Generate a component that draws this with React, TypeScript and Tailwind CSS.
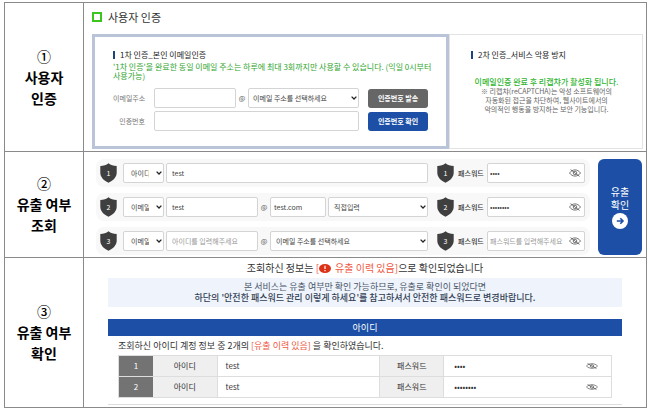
import type { ReactNode } from "react";

const FIELD =
	"h-[20px] min-w-0 rounded-[2px] border border-[#d4d4d4] bg-white text-[7px] text-[#444] placeholder:text-[#999] outline-none";

export default function App() {
	return (
		<main className="pt-[2px] pr-[3px] pb-[3px] pl-1 bg-white font-['Noto_Sans_CJK_KR','Noto_Sans',sans-serif] text-[#333]">
			<div className="border-t border-l border-r border-[#8a8a8a]">
				<Step mark="①" lines={["사용자", "인증"]}>
					<VerifyStep />
				</Step>
				<Step mark="②" lines={["유출 여부", "조회"]}>
					<LookupStep />
				</Step>
				<Step mark="③" lines={["유출 여부", "확인"]}>
					<ResultStep />
				</Step>
			</div>
		</main>
	);
}

function Step({
	mark,
	lines,
	children,
}: { mark: string; lines: string[]; children: ReactNode }) {
	return (
		<section className="flex border-b border-[#8a8a8a]">
			<h2 className="w-[79px] shrink-0 border-r border-[#8a8a8a] flex flex-col items-center justify-center text-center text-[14px] leading-[21px] font-bold text-black">
				<span className="font-medium">{mark}</span>
				{lines.map((line) => (
					<span key={line}>{line}</span>
				))}
			</h2>
			<div className="min-w-0 flex-1">{children}</div>
		</section>
	);
}

// Step 1: e-mail verification next to the captcha notice
function VerifyStep() {
	return (
		<div className="pt-2 pl-2 pr-[3px] pb-[2px]">
			<h3 className="flex items-center gap-[6px] text-[11px] leading-[12px] text-[#333]">
				<span className="size-[10px] border-2 border-[#3cc51f]" />
				사용자 인증
			</h3>
			<div className="mt-[11px] grid grid-cols-[minmax(0,357fr)_minmax(0,194fr)]">
				<form className="border-[3px] border-[#bac4d9] px-[18px] pt-[13px] pb-[15px]">
					<PanelTitle>1차 인증_본인 이메일인증</PanelTitle>
					<p className="mt-[2px] -mr-3 text-[8px] leading-[9px] text-[#2fa52f]">
						'1차 인증'을 완료한 동일 이메일 주소는 하루에 최대 3회까지만 사용할 수
						있습니다. (익일 0시부터
						<br />
						사용가능)
					</p>
					<div className="mt-[8px] flex items-center">
						<label
							htmlFor="mail"
							className="w-8 shrink-0 text-right text-[7px] leading-[10px] whitespace-nowrap text-[#777]"
						>
							이메일주소
						</label>
						<input id="mail" className={`${FIELD} ml-[9px] flex-1 px-1`} />
						<At />
						<Select
							label="이메일 도메인"
							value="이메일 주소를 선택하세요"
							className="w-[111px]"
							pad="pl-1"
						/>
						<button
							type="button"
							className="ml-[9px] h-[19px] w-[60px] shrink-0 rounded-[3px] bg-[#666] text-[7px] font-bold text-white"
						>
							인증번호 발송
						</button>
					</div>
					<div className="mt-[3px] flex items-center">
						<label
							htmlFor="code"
							className="w-8 shrink-0 text-right text-[7px] leading-[10px] whitespace-nowrap text-[#777]"
						>
							인증번호
						</label>
						<input id="code" className={`${FIELD} ml-[9px] flex-1 px-1`} />
						<button
							type="button"
							className="ml-[9px] h-[19px] w-[60px] shrink-0 rounded-[3px] bg-[#1c4fa5] text-[7px] font-bold text-white"
						>
							인증번호 확인
						</button>
					</div>
				</form>
				<div className="border border-[#e3e3e3] pt-[15px] pl-[21px] pr-[20px]">
					<PanelTitle>2차 인증_서비스 악용 방지</PanelTitle>
					<p className="mt-[17px] text-center text-[8px] leading-[10px] font-medium whitespace-nowrap text-[#2fb52f]">
						이메일인증 완료 후 리캡챠가 활성화 됩니다.
					</p>
					<p className="text-center text-[7px] leading-[9px] whitespace-nowrap text-[#666]">
						※ 리캡챠(reCAPTCHA)는 악성 소프트웨어의
						<br />
						자동화된 접근을 차단하여, 웹사이트에서의
						<br />
						악의적인 행동을 방지하는 보안 기능입니다.
					</p>
				</div>
			</div>
		</div>
	);
}

function PanelTitle({ children }: { children: ReactNode }) {
	return (
		<h4 className="flex items-center gap-[5px] text-[8px] leading-[10px] whitespace-nowrap text-[#222]">
			<span className="h-2 w-[2px] bg-[#1d4378]" />
			{children}
		</h4>
	);
}

// Step 2: accounts to look up
function LookupStep() {
	return (
		<form className="flex gap-2 pt-[7px] pr-1 pb-[2px] pl-3">
			<div className="min-w-0 flex-1 space-y-[6px]">
				<LookupRow no={1} kind="아이디" password="test">
					<input
						aria-label="아이디 1"
						defaultValue="test"
						className={`${FIELD} flex-1 px-[5px]`}
					/>
				</LookupRow>
				<LookupRow no={2} kind="이메일" password="testtest">
					<input
						aria-label="이메일 2"
						defaultValue="test"
						className={`${FIELD} flex-1 px-[5px]`}
					/>
					<At />
					<input
						aria-label="도메인 2"
						defaultValue="test.com"
						className={`${FIELD} w-[56px] px-[3px]`}
					/>
					<Select
						label="도메인 선택 2"
						value="직접입력"
						className="ml-[2px] w-[100px]"
						pad="pl-[5px]"
					/>
				</LookupRow>
				<LookupRow no={3} kind="이메일" password="">
					<input
						aria-label="이메일 3"
						placeholder="아이디를 입력해주세요"
						className={`${FIELD} flex-1 px-[5px]`}
					/>
					<At />
					<Select
						label="도메인 선택 3"
						value="이메일 주소를 선택하세요"
						className="w-[158px]"
						pad="pl-[5px]"
					/>
				</LookupRow>
			</div>
			<button
				type="button"
				className="flex w-[44px] shrink-0 flex-col items-center justify-center rounded-[6px] bg-[#1c4fa5] text-[10px] leading-[13px] text-white"
			>
				<span>유출</span>
				<span>확인</span>
				<svg viewBox="0 0 16 16" className="mt-[2px] size-4">
					<circle cx="8" cy="8" r="8" fill="#fff" />
					<path
						d="M4.8 8h6M8.3 5.3 11 8l-2.7 2.7"
						fill="none"
						stroke="#1c4fa5"
						strokeWidth="1.6"
					/>
				</svg>
			</button>
		</form>
	);
}

function LookupRow({
	no,
	kind,
	password,
	children,
}: { no: number; kind: string; password: string; children: ReactNode }) {
	return (
		<div className="flex h-7 items-center rounded-[8px] bg-[#f8f8f8] pr-[5px] pl-1">
			<Shield no={no} />
			<Select
				label={`구분 ${no}`}
				value={kind}
				className="mr-[2px] ml-[6px] w-[41px]"
				pad="pl-[7px]"
			/>
			<div className="flex min-w-0 flex-1 items-center">{children}</div>
			<span className="w-[9px] shrink-0" />
			<Shield no={no} />
			<label
				htmlFor={`pw${no}`}
				className="ml-1 w-[29px] shrink-0 text-[7px] leading-[10px] font-medium whitespace-nowrap"
			>
				패스워드
			</label>
			<div className="relative flex w-[98px] shrink-0">
				<input
					id={`pw${no}`}
					type="password"
					defaultValue={password}
					placeholder="패스워드를 입력해주세요"
					className={`${FIELD} w-full px-[2px]`}
				/>
				<EyeOff className="absolute top-[6px] right-1 h-2 w-3" />
			</div>
		</div>
	);
}

function Select({
	label,
	value,
	className,
	pad,
}: { label: string; value: string; className: string; pad: string }) {
	return (
		<div className={`relative flex shrink-0 ${className}`}>
			<select
				aria-label={label}
				className={`${FIELD} w-full appearance-none pr-[14px] ${pad}`}
			>
				<option>{value}</option>
			</select>
			<svg
				viewBox="0 0 6 4"
				className="pointer-events-none absolute top-2 right-[2px] h-1 w-[6px]"
			>
				<path
					d="M.6.6 3 3 5.4.6"
					fill="none"
					stroke="#222"
					strokeWidth="1.3"
				/>
			</svg>
		</div>
	);
}

function At() {
	return (
		<span className="w-[12px] shrink-0 text-center text-[7px] leading-[10px] text-[#555]">
			@
		</span>
	);
}

function Shield({ no }: { no: number }) {
	return (
		<span className="relative flex h-[20px] w-[17px] shrink-0 items-center justify-center text-[7px] leading-[10px] text-white">
			<svg viewBox="0 0 17 20" className="absolute inset-0 size-full">
				<path
					d="M8.5 .3C6.3 2 3.6 2.9 .3 3v6.500c0 4.500 3.200 8 8.200 10.200 5-2.200 8.200-5.700 8.200-10.200V3C13.400 2.900 10.700 2 8.500 .3Z"
					fill="#3f3f3f"
				/>
			</svg>
			<span className="relative">{no}</span>
		</span>
	);
}

function EyeOff({ className }: { className: string }) {
	return (
		<svg
			viewBox="0 0 12 8"
			preserveAspectRatio="none"
			className={className}
			fill="none"
			stroke="#555"
			strokeWidth="0.8"
		>
			<path d="M.5 4C2 1.900 3.900 .9 6 .9S10 1.900 11.500 4C10 6.100 8.100 7.100 6 7.100S2 6.100 .5 4Z" />
			<circle cx="6" cy="4" r="1.800" />
			<path d="M1.500 .6l9 6.800" />
		</svg>
	);
}

// Step 3: lookup result
const RESULTS = [
	{ no: 1, id: "test", dots: "••••" },
	{ no: 2, id: "test", dots: "••••••••" },
];

function ResultStep() {
	return (
		<div className="pt-1 pr-6 pb-[2px] pl-6">
			<p className="flex items-center justify-center text-[10px] leading-[12px] whitespace-pre">
				조회하신 정보는{" "}
				<span className="flex items-center text-[#ee5a45]">
					[
					<svg viewBox="0 0 12 9" className="mr-1 h-[9px] w-3">
						<ellipse cx="6" cy="4.500" rx="6" ry="4.500" fill="#dc3218" />
						<path d="M6 1.800v3.200M6 6v1.200" stroke="#fff" strokeWidth="1.200" />
					</svg>
					유출 이력 있음]
				</span>
				으로 확인되었습니다
			</p>
			<div className="mt-1 bg-[#eff4fc] pt-[3px] pb-[4px] text-center text-[9px] leading-[11px] text-[#4a5568]">
				<p>본 서비스는 유출 여부만 확인 가능하므로, 유출로 확인이 되었다면</p>
				<p className="font-medium text-[#333f55]">
					하단의 '안전한 패스워드 관리 이렇게 하세요'를 참고하셔서 안전한
					패스워드로 변경바랍니다.
				</p>
			</div>
			<h3 className="mt-3 bg-[#1c4fa5] text-center text-[9px] leading-[17px] text-white">
				아이디
			</h3>
			<div className="border-b border-[#ddd] px-[10px] pt-1 pb-[6px]">
				<p className="text-[9px] leading-[12px]">
					조회하신 아이디 계정 정보 중 2개의{" "}
					<span className="text-[#ee5a45]">[유출 이력 있음]</span> 을
					확인하였습니다.
				</p>
				<table className="mt-[3px] w-full table-fixed border-collapse border border-[#ddd] text-[8px] leading-[20px]">
					<colgroup>
						<col className="w-[7%]" />
						<col className="w-[13%]" />
						<col className="w-[33%]" />
						<col className="w-[13%]" />
						<col className="w-[34%]" />
					</colgroup>
					<tbody>
						{RESULTS.map((r) => (
							<tr key={r.no} className="border-b border-[#ddd]">
								<th className="bg-[#737373] font-normal text-white">{r.no}</th>
								<th className="border-r border-[#ddd] bg-[#efefef] font-normal">
									아이디
								</th>
								<td className="pl-2">{r.id}</td>
								<th className="border-x border-[#ddd] bg-[#efefef] font-normal">
									패스워드
								</th>
								<td>
									<div className="flex items-center justify-between pr-[13px] pl-[10px]">
										<span>{r.dots}</span>
										<EyeOff className="h-[6px] w-3" />
									</div>
								</td>
							</tr>
						))}
					</tbody>
				</table>
			</div>
		</div>
	);
}
